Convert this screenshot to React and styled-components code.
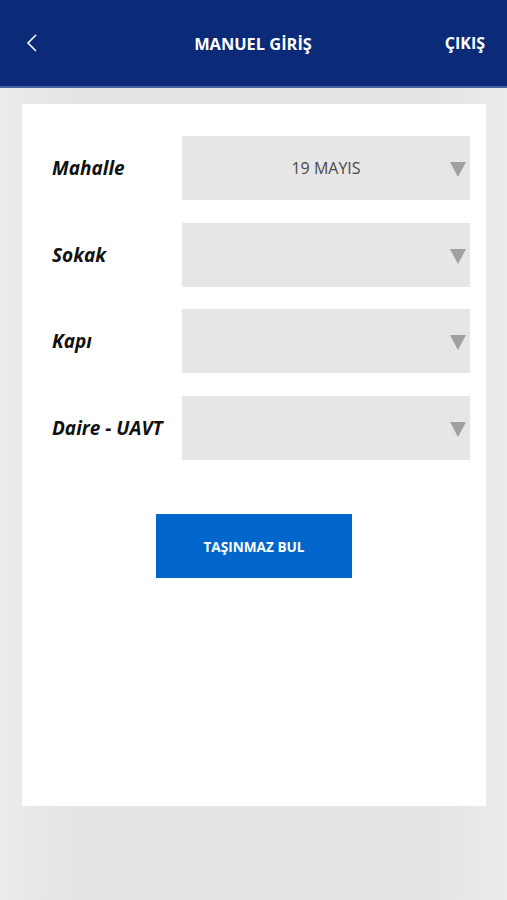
import React from 'react';
import styled, { createGlobalStyle } from 'styled-components';

const GlobalStyle = createGlobalStyle`
  html, body {
    margin: 0;
    padding: 0;
  }
  body {
    font-family: "Open Sans", "Liberation Sans", sans-serif;
    background: linear-gradient(90deg, #ececec 0%, #e4e4e4 15%, #e4e4e4 85%, #ececec 100%);
    min-height: 900px;
  }
`;

const fields = [
  { label: 'Mahalle', value: '19 MAYIS' },
  { label: 'Sokak', value: '' },
  { label: 'Kapı', value: '' },
  { label: 'Daire - UAVT', value: '' },
];

function App() {
  return (
    <>
      <GlobalStyle />
      <Page>
        {/* üst bar */}
        <Header>
          <BackBtn>
            <svg width="14" height="20" viewBox="0 0 14 20">
              <path d="M11 2 L3 10 L11 18" fill="none" stroke="#fff" strokeWidth="1.6" />
            </svg>
          </BackBtn>
          <HeaderTitle>MANUEL GİRİŞ</HeaderTitle>
          <HeaderAction>ÇIKIŞ</HeaderAction>
        </Header>
        <Card>
          <FormList>
            {fields.map((f) => (
              <FormRow key={f.label}>
                <FieldLabel>{f.label}</FieldLabel>
                <SelectBox>
                  <SelectValue>{f.value}</SelectValue>
                  <Arrow />
                </SelectBox>
              </FormRow>
            ))}
          </FormList>
          <ButtonWrap>
            <FindBtn>TAŞINMAZ BUL</FindBtn>
          </ButtonWrap>
        </Card>
      </Page>
    </>
  );
}

export default App;

const Page = styled.div`
  width: 507px;
  height: 900px;
  display: flex;
  flex-direction: column;
`;
const Header = styled.header`
  height: 86px;
  background: #0b2a78;
  border-bottom: 2px solid #4a64a0;
  display: grid;
  grid-template-columns: 1fr auto 1fr;
  align-items: center;
  padding: 0 22px 0 25px;
  color: #fff;
`;
const BackBtn = styled.div`
  display: flex;
  align-items: center;
  height: 20px;
`;
const HeaderTitle = styled.h1`
  margin: 0;
  font-size: 16.4px;
  font-weight: 700;
  position: relative;
  left: -2px;
`;
const HeaderAction = styled.div`
  justify-self: end;
  font-size: 16px;
  font-weight: 700;
`;
const Card = styled.main`
  margin: 16px 21px 0 22px;
  height: 702px;
  background: #fff;
  padding: 32px 16px 0 30px;
  box-sizing: border-box;
`;
const FormList = styled.ul`
  list-style: none;
  margin: 0;
  padding: 0;
  display: flex;
  flex-direction: column;
  gap: 22.7px;
`;
const FormRow = styled.li`
  display: grid;
  grid-template-columns: 130px 1fr;
  align-items: center;
`;
const FieldLabel = styled.span`
  font-size: 19px;
  font-weight: 700;
  font-style: italic;
  color: #111;
`;
const SelectBox = styled.div`
  height: 64px;
  background: #e6e6e6;
  display: flex;
  align-items: center;
  justify-content: center;
  position: relative;
`;
const SelectValue = styled.span`
  font-size: 16px;
  color: #4a4a4a;
`;
const Arrow = styled.span`
  position: absolute;
  right: 4px;
  top: 26px;
  width: 0;
  height: 0;
  border-left: 8px solid transparent;
  border-right: 8px solid transparent;
  border-top: 15px solid #a0a0a0;
`;
const ButtonWrap = styled.div`
  display: flex;
  justify-content: center;
  margin-top: 54px;
  padding-right: 14px;
`;
const FindBtn = styled.button`
  width: 196px;
  height: 64px;
  border: none;
  background: #0066cc;
  color: #fff;
  font-family: "Open Sans", "Liberation Sans", sans-serif;
  font-size: 13.6px;
  font-weight: 700;
`;
